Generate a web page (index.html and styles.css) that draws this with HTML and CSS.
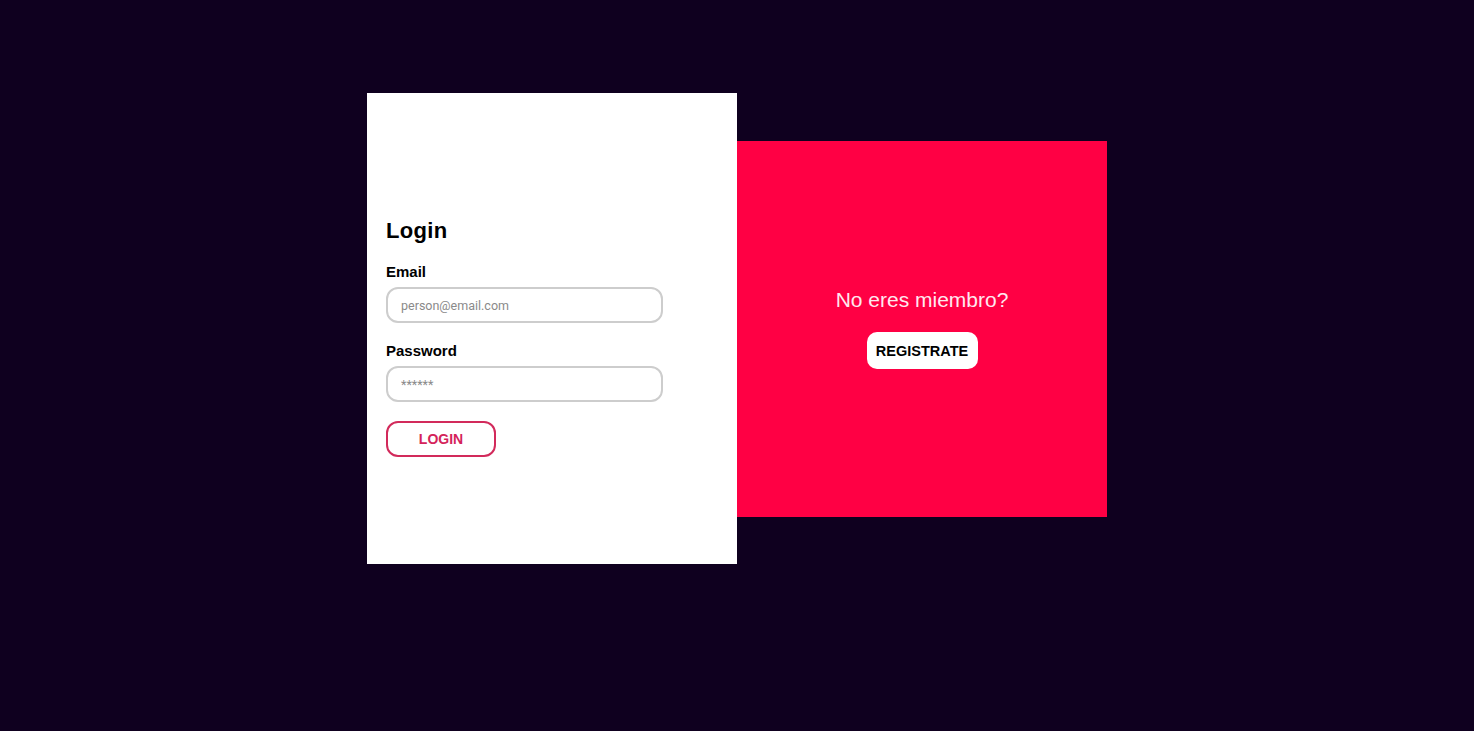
FILE: index.html
```html
<!DOCTYPE html>
<html lang="es">
<head>
<meta charset="utf-8">
<title>Login</title>
<link rel="stylesheet" href="styles.css">
</head>
<body>
<main class="stage">
  <section class="login-card">
    <h1 class="title">Login</h1>
    <form class="form">
      <div class="field">
        <label class="label" for="email">Email</label>
        <input class="input" id="email" type="text" placeholder="person@email.com">
      </div>
      <div class="field">
        <label class="label" for="pass">Password</label>
        <input class="input" id="pass" type="text" placeholder="******">
      </div>
      <button class="btn-login" type="button">LOGIN</button>
    </form>
  </section>
  <section class="register-card">
    <p class="register-text">No eres miembro?</p>
    <button class="btn-register" type="button">REGISTRATE</button>
  </section>
</main>
</body>
</html>
```

FILE: styles.css
```css
* { box-sizing: border-box; }

html, body {
  margin: 0;
  height: 100%;
}

body {
  background: #0f001f;
  font-family: "Liberation Sans", Arial, sans-serif;
}

.stage {
  display: flex;
  justify-content: center;
  align-items: center;
  padding-top: 93px;
}

.login-card {
  width: 370px;
  height: 471px;
  background: #ffffff;
  padding: 125px 19px 0 19px;
}

.title {
  margin: 0 0 19px 0;
  font-size: 22px;
  line-height: 26px;
  font-weight: 700;
  color: #000;
  letter-spacing: 0.3px;
}

.form {
  display: flex;
  flex-direction: column;
  align-items: flex-start;
}

.field {
  display: flex;
  flex-direction: column;
  margin-bottom: 19px;
}

.label {
  font-size: 15px;
  line-height: 18px;
  font-weight: 700;
  color: #000;
  margin-bottom: 6px;
}

.input {
  width: 277px;
  height: 36px;
  border: 2px solid #cdcdcd;
  border-radius: 12px;
  padding: 0 13px;
  font-family: Roboto, "Liberation Sans", sans-serif;
  font-size: 12.5px;
  color: #333;
  background: #fff;
  outline: none;
}

.input::placeholder {
  color: #8a8a8a;
}

.btn-login {
  width: 110px;
  height: 36px;
  border: 2px solid #d22a5b;
  border-radius: 12px;
  background: #fff;
  color: #d4235a;
  font-family: "Liberation Sans", Arial, sans-serif;
  font-size: 14px;
  font-weight: 700;
  padding: 0;
}

.register-card {
  width: 370px;
  height: 376px;
  background: #ff0044;
  display: flex;
  flex-direction: column;
  align-items: center;
  justify-content: center;
}

.register-text {
  margin: 0 0 20px 0;
  font-size: 21px;
  line-height: 24px;
  color: #ffe8ef;
}

.btn-register {
  width: 111px;
  height: 37px;
  border: none;
  border-radius: 10px;
  background: #fff;
  color: #000;
  font-family: "Liberation Sans", Arial, sans-serif;
  font-size: 14.5px;
  font-weight: 700;
  padding: 0;
}
```
